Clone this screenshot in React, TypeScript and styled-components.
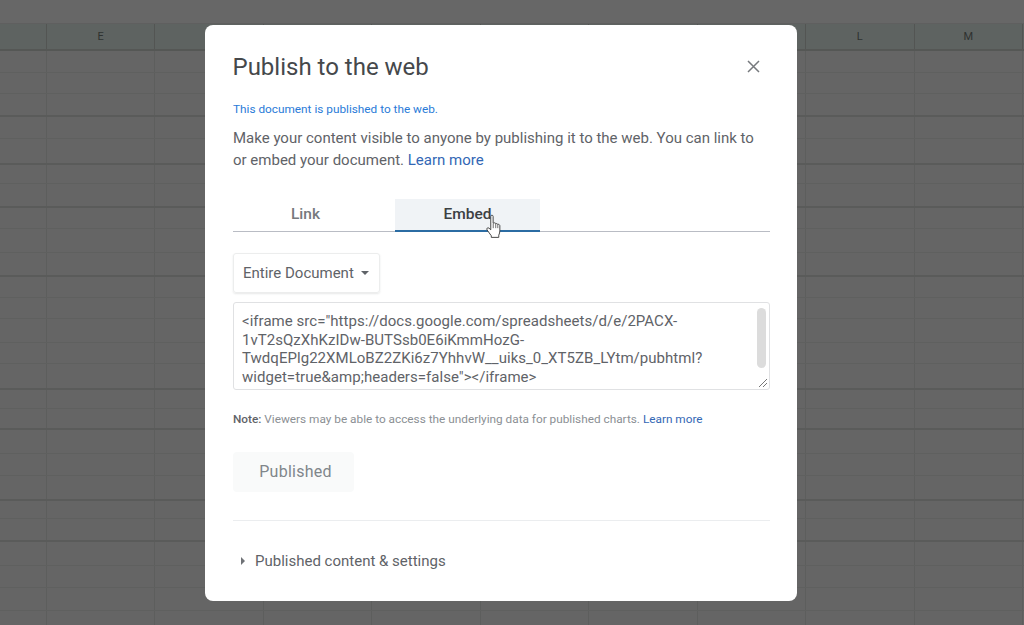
import React from "react";
import styled, { createGlobalStyle } from "styled-components";

const Global = createGlobalStyle`
  html, body { margin: 0; padding: 0; height: 100%; background: #656565; overflow: hidden; }
  #root { height: 100%; }
`;

const Page = styled.div`
  position: relative;
  width: 1024px;
  height: 625px;
  overflow: hidden;
  background: #656565;
  font-family: Roboto, "Liberation Sans", sans-serif;
`;

const Toolbar = styled.div`
  height: 23px;
  background: #676767;
  border-bottom: 1px solid #5f5f5f;
`;

const HeaderRow = styled.div`
  display: grid;
  grid-template-columns: 47px repeat(9, 108.45px);
  height: 25px;
  background: #5e6361;
  border-bottom: 2px solid #555755;
`;

const HeaderCell = styled.div`
  display: flex;
  align-items: center;
  justify-content: center;
  border-right: 1px solid #535553;
  color: #2f3230;
  font-size: 11px;
`;

const SheetRow = styled.div<{ $height: number; $strong?: boolean }>`
  display: grid;
  grid-template-columns: 47px repeat(9, 108.45px);
  box-sizing: border-box;
  height: ${(p) => p.$height}px;
  border-bottom: ${(p) => (p.$strong ? "2px solid #5a5b5a" : "1px solid #5f605f")};
`;

const Cell = styled.div`
  border-right: 1px solid #5d5e5d;
`;

const Dialog = styled.div`
  position: absolute;
  left: 205px;
  top: 25px;
  width: 592px;
  height: 576px;
  box-sizing: border-box;
  padding: 25px 27px 0 28px;
  background: #fff;
  border-radius: 8px;
  display: flex;
  flex-direction: column;
`;

const TitleRow = styled.div`
  display: flex;
  align-items: center;
  justify-content: space-between;
  height: 32px;
`;

const Title = styled.h1`
  margin: 2px 0 0 -0.5px;
  font-size: 24px;
  font-weight: 400;
  color: #45484b;
`;

const Close = styled.button`
  display: flex;
  margin: 0 10px 0 0;
  padding: 0;
  border: 0;
  background: none;
`;

const Status = styled.div`
  margin-top: 20px;
  height: 14px;
  line-height: 14px;
  font-size: 11.8px;
  color: #2a7bd8;
`;

const Body = styled.p`
  margin: 11px 0 0;
  font-size: 15px;
  line-height: 22px;
  color: #5f6368;
`;

const Link = styled.a`
  color: #3367b5;
`;

const Tabs = styled.div`
  display: flex;
  gap: 17px;
  margin-top: 28px;
  height: 32px;
  border-bottom: 1px solid #b9bcc4;
`;

const Tab = styled.div<{ $active?: boolean }>`
  width: 145px;
  box-sizing: border-box;
  height: 33px;
  padding-bottom: 2px;
  display: flex;
  align-items: center;
  justify-content: center;
  font-size: 15.5px;
  font-weight: 500;
  color: ${(p) => (p.$active ? "#3c4043" : "#76797d")};
  background: ${(p) => (p.$active ? "#f0f3f6" : "transparent")};
  border-bottom: 2px solid ${(p) => (p.$active ? "#2b6ca3" : "transparent")};
`;

const Select = styled.div`
  align-self: flex-start;
  margin-top: 21px;
  width: 147px;
  height: 40px;
  box-sizing: border-box;
  padding-left: 9px;
  display: flex;
  align-items: center;
  gap: 7px;
  font-size: 15px;
  color: #5f6368;
  border: 1px solid #eceded;
  border-radius: 3px;
  box-shadow: 0 1px 2px rgba(60, 64, 67, 0.12);
`;

const Caret = styled.span`
  width: 0;
  height: 0;
  border-left: 4px solid transparent;
  border-right: 4px solid transparent;
  border-top: 4px solid #5f6368;
`;

const CodeBox = styled.div`
  position: relative;
  margin-top: 9px;
  height: 88px;
  box-sizing: border-box;
  padding: 9px 30px 0 8px;
  border: 1px solid #e0e1e3;
  border-radius: 3px;
  font-size: 15px;
  letter-spacing: 0.035px;
  line-height: 18.7px;
  color: #5f6368;
  white-space: nowrap;
`;

const ScrollThumb = styled.div`
  position: absolute;
  right: 3px;
  top: 5px;
  width: 9px;
  height: 60px;
  border-radius: 5px;
  background: #dcdcdc;
`;

const Grip = styled.svg`
  position: absolute;
  right: 1px;
  bottom: 1px;
`;

const Note = styled.div`
  margin-top: 22px;
  height: 14px;
  line-height: 14px;
  font-size: 11.8px;
  color: #8b8f94;
`;

const NoteLabel = styled.b`
  font-weight: 500;
  color: #5f6368;
`;

const Published = styled.div`
  margin-top: 26px;
  width: 121px;
  height: 40px;
  box-sizing: border-box;
  padding: 0 0 2px 4px;
  display: flex;
  align-items: center;
  justify-content: center;
  background: #f9fafa;
  border-radius: 4px;
  font-size: 16px;
  letter-spacing: 0.25px;
  color: #80868b;
`;

const Divider = styled.div`
  margin-top: 28px;
  height: 1px;
  background: #ebedef;
`;

const Expander = styled.div`
  margin-top: 30px;
  height: 20px;
  display: flex;
  align-items: center;
  gap: 10px;
  padding-left: 8px;
  font-size: 15px;
  color: #5f6368;
`;

const Arrow = styled.span`
  width: 0;
  height: 0;
  border-top: 4px solid transparent;
  border-bottom: 4px solid transparent;
  border-left: 4px solid #6f7276;
`;

const Hand = styled.svg`
  position: absolute;
  left: 280px;
  top: 188px;
`;

const columns = ["", "E", "", "", "", "", "", "", "L", "M"];

/* Bottom edge of each spreadsheet row, read from the picture; true marks a heavier line. */
const rowEdges: [number, boolean][] = [
  [72, false], [93, false], [116, true], [138, false], [164, true], [183, false],
  [207, true], [228, false], [252, false], [276, true], [297, false], [318, false],
  [342, false], [363, false], [389, true], [408, false], [429, true], [453, false],
  [475, false], [500, true], [518, false], [541, true], [565, false], [587, false],
  [610, false], [634, false],
];

const rows = rowEdges.map(([edge, strong], i) => ({
  height: edge - (i === 0 ? 50 : rowEdges[i - 1][0]),
  strong,
}));

export default function App() {
  return (
    <Page>
      <Global />
      <Toolbar />
      <HeaderRow>
        {columns.map((c, i) => (
          <HeaderCell key={i}>{c}</HeaderCell>
        ))}
      </HeaderRow>
      {rows.map((r, i) => (
        <SheetRow key={i} $height={r.height} $strong={r.strong}>
          {columns.map((_, j) => (
            <Cell key={j} />
          ))}
        </SheetRow>
      ))}
      <Dialog>
        <TitleRow>
          <Title>Publish to the web</Title>
          <Close aria-label="Close">
            <svg width="13" height="13" viewBox="0 0 13 13">
              <path d="M1 1L12 12M12 1L1 12" stroke="#76797d" strokeWidth="1.5" fill="none" />
            </svg>
          </Close>
        </TitleRow>
        <Status>This document is published to the web.</Status>
        <Body>
          Make your content visible to anyone by publishing it to the web. You can link to
          <br />
          or embed your document. <Link>Learn more</Link>
        </Body>
        <Tabs>
          <Tab>Link</Tab>
          <Tab $active>Embed</Tab>
        </Tabs>
        <Select>
          Entire Document <Caret />
        </Select>
        <CodeBox>
          {'<iframe src="https://docs.google.com/spreadsheets/d/e/2PACX-'}
          <br />
          1vT2sQzXhKzIDw-BUTSsb0E6iKmmHozG-
          <br />
          TwdqEPlg22XMLoBZ2ZKi6z7YhhvW__uiks_0_XT5ZB_LYtm/pubhtml?
          <br />
          {'widget=true&amp;headers=false"></iframe>'}
          <ScrollThumb />
          <Grip width="11" height="11" viewBox="0 0 11 11">
            <path d="M2 10L10 2M6 10L10 6" stroke="#777" strokeWidth="1" fill="none" />
          </Grip>
        </CodeBox>
        <Note>
          <NoteLabel>Note:</NoteLabel> Viewers may be able to access the underlying data for published charts.{" "}
          <Link>Learn more</Link>
        </Note>
        <Published>Published</Published>
        <Divider />
        <Expander>
          <Arrow />
          Published content &amp; settings
        </Expander>
        <Hand width="18" height="26" viewBox="0 0 16 24">
          <path
            d="M5 13V3.2C5 1.6 7.2 1.6 7.2 3.2V9.5L8 9.2C8.8 8.9 9.5 9.2 9.6 9.9C10.4 9.5 11.2 9.8 11.4 10.5C12.4 10.2 13.4 10.8 13.4 11.8V16.5C13.4 18 13 19 12.4 20.5V22.5H5.5V21C4.5 19.5 2.8 17.5 1.6 15.6C0.8 14.3 2.2 13 3.4 14L5 15.5Z"
            fill="#fff"
            stroke="#444"
            strokeWidth="0.9"
            strokeLinejoin="round"
          />
          <path d="M7.3 10V14M9.6 10V14M11.5 10.7V14" stroke="#444" strokeWidth="0.7" fill="none" />
        </Hand>
      </Dialog>
    </Page>
  );
}
